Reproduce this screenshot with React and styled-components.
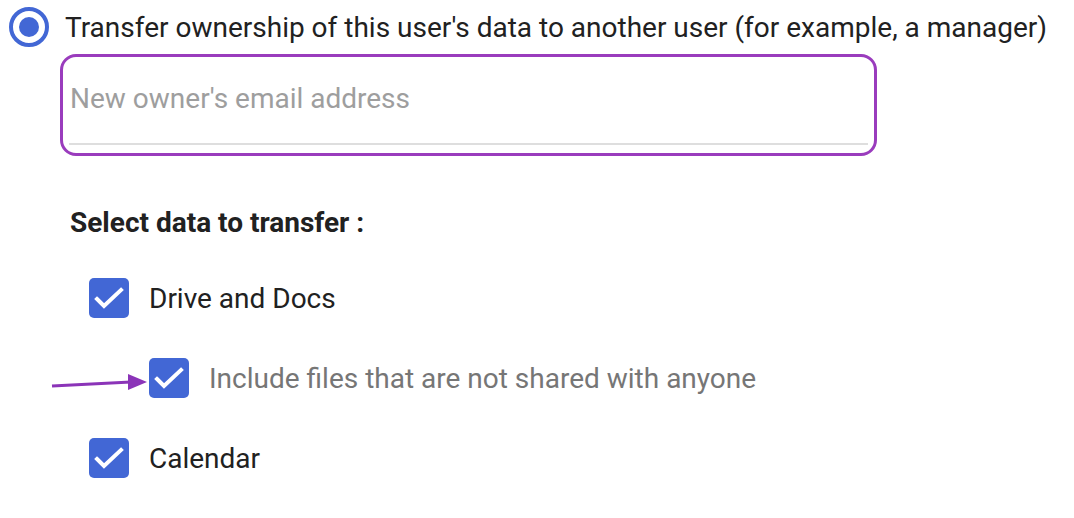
import React from 'react';
import styled, { createGlobalStyle } from 'styled-components';

const GlobalStyle = createGlobalStyle`
    body {
        margin: 0;
        background: #ffffff;
        font-family: Roboto, "Liberation Sans", sans-serif;
    }
`;

const Page = styled.div`
    display: flex;
    flex-direction: column;
    padding: 7px 0 0 9px;
`;

const RadioRow = styled.label`
    display: flex;
    align-items: center;
    gap: 16px;
    height: 40px;
`;

const Radio = styled.span`
    box-sizing: border-box;
    width: 40px;
    height: 40px;
    border: 4px solid #4267d5;
    border-radius: 50%;
    display: flex;
    align-items: center;
    justify-content: center;
    flex-shrink: 0;

    &::after {
        content: '';
        width: 20px;
        height: 20px;
        border-radius: 50%;
        background: #4267d5;
    }
`;

const Title = styled.span`
    font-size: 28px;
    color: #212121;
    white-space: nowrap;
`;

const EmailBox = styled.div`
    box-sizing: border-box;
    margin: 7px 0 0 51px;
    width: 817px;
    height: 102px;
    border: 3px solid #9a3cbd;
    border-radius: 16px;
    padding: 0 6px;
    display: flex;
    flex-direction: column;
`;

const EmailInput = styled.input`
    border: none;
    outline: none;
    background: transparent;
    font-family: Roboto, "Liberation Sans", sans-serif;
    font-size: 28px;
    color: #212121;
    padding: 21px 0 0 1px;
    height: 40px;

    &::placeholder {
        color: #9e9e9e;
    }
`;

const Underline = styled.div`
    margin-top: auto;
    margin-bottom: 8px;
    height: 2px;
    background: #dedede;
`;

const Heading = styled.h3`
    margin: 52px 0 0 61px;
    font-size: 28px;
    font-weight: 700;
    color: #212121;
    line-height: 30px;
`;

const Options = styled.div`
    display: flex;
    flex-direction: column;
    gap: 40px;
    margin-top: 40px;
`;

const OptionRow = styled.div`
    position: relative;
    display: flex;
    align-items: center;
    gap: 20px;
    height: 40px;
    padding-left: ${(p) => (p.$nested ? 140 : 80)}px;
`;

const Box = styled.span`
    width: 40px;
    height: 40px;
    border-radius: 5px;
    background: #4267d5;
    display: flex;
    align-items: center;
    justify-content: center;
    flex-shrink: 0;
`;

const OptionLabel = styled.span`
    font-size: 28px;
    color: ${(p) => (p.$muted ? '#767676' : '#212121')};
`;

const Arrow = styled.svg`
    position: absolute;
    left: 42px;
    top: 6px;
`;

const Check = () => (
    <svg width="40" height="40" viewBox="0 0 40 40">
        <polyline points="8,21 15,28 32,12" fill="none" stroke="#ffffff" strokeWidth="4" strokeLinecap="square" />
    </svg>
);

const Option = ({ label, nested, muted, arrow }) => (
    <OptionRow $nested={nested}>
        {arrow && (
            <Arrow width="100" height="30" viewBox="0 0 100 30">
                <line x1="1" y1="22" x2="80" y2="18" stroke="#8b34b8" strokeWidth="3" />
                <polygon points="77,10 96,18 77,26" fill="#8b34b8" />
            </Arrow>
        )}
        <Box><Check /></Box>
        <OptionLabel $muted={muted}>{label}</OptionLabel>
    </OptionRow>
);

export default function App() {
    return (
        <>
            <GlobalStyle />
            <Page>
                <RadioRow>
                    <Radio />
                    <Title>Transfer ownership of this user's data to another user (for example, a manager)</Title>
                </RadioRow>
                <EmailBox>
                    <EmailInput placeholder="New owner's email address" />
                    <Underline />
                </EmailBox>
                <Heading>Select data to transfer :</Heading>
                <Options>
                    <Option label="Drive and Docs" />
                    <Option label="Include files that are not shared with anyone" nested muted arrow />
                    <Option label="Calendar" />
                </Options>
            </Page>
        </>
    );
}
